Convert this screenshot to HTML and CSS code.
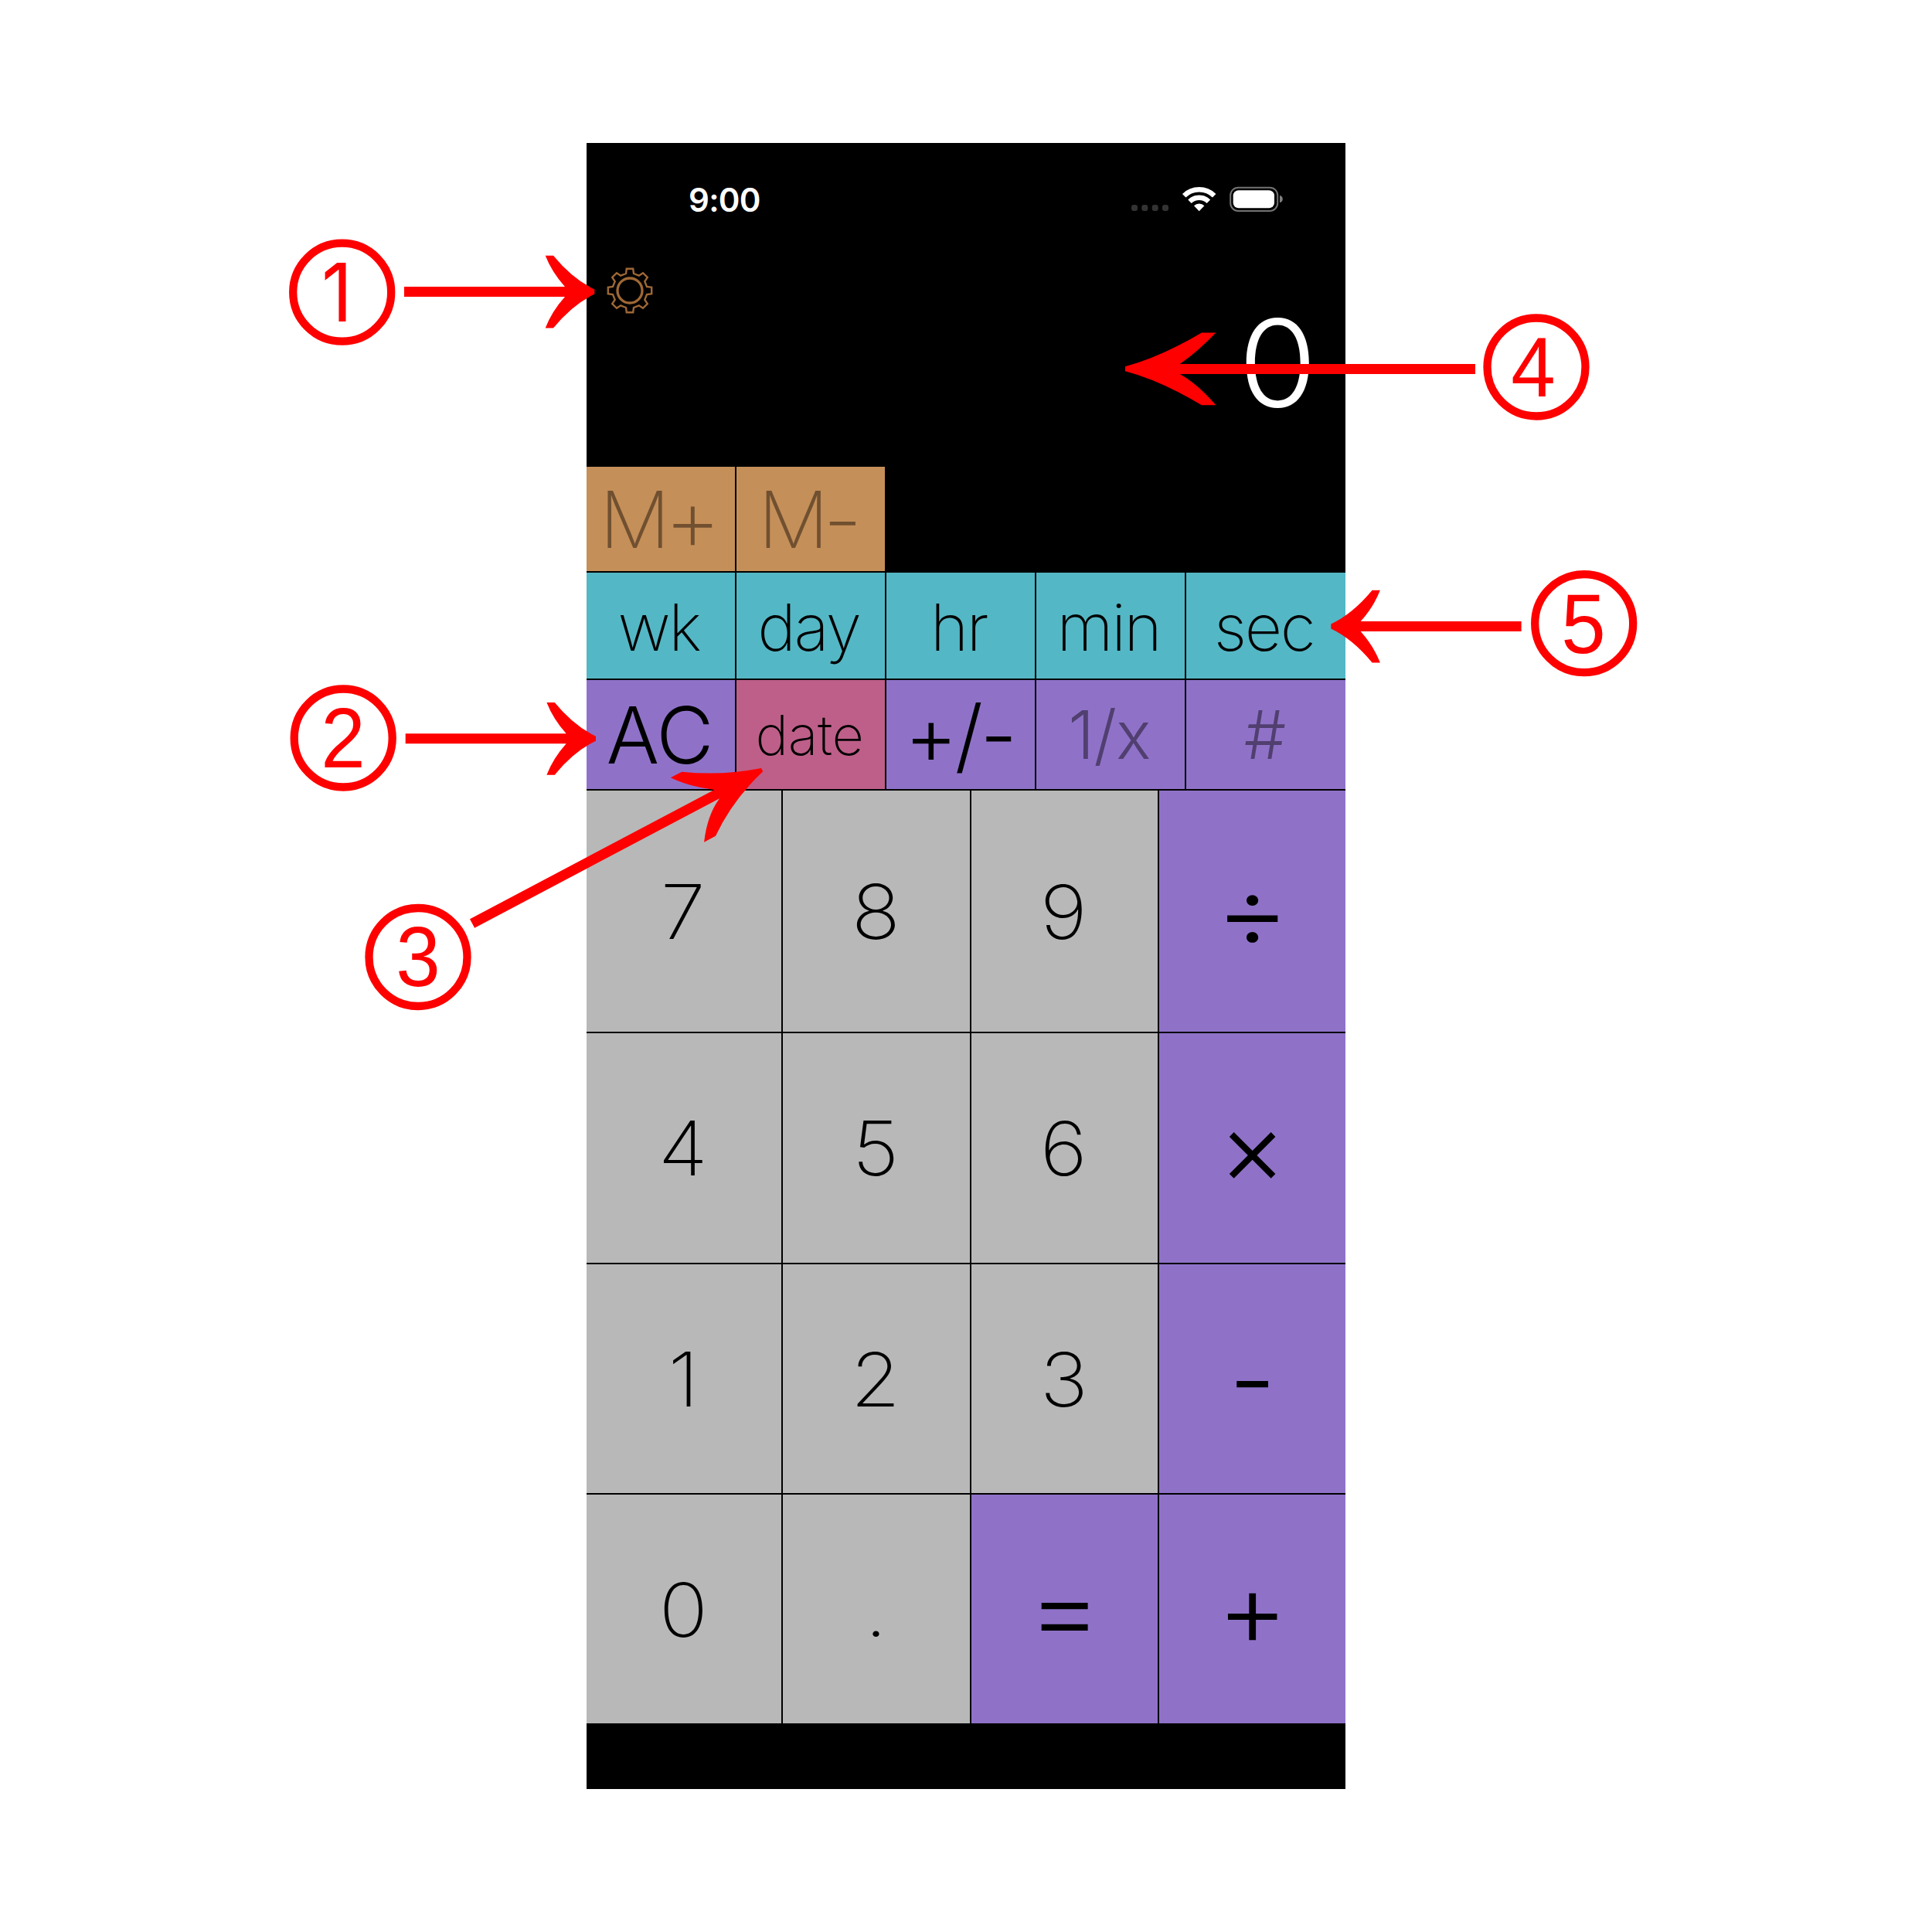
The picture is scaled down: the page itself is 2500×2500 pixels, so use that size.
FILE: index.html
```html
<!DOCTYPE html>
<html>
<head>
<meta charset="utf-8" />
<title>Time Calculator Help</title>
<link rel="stylesheet" href="styles.css">
</head>
<body>
<div class="page">

<!-- ************ Phone ************ -->
<div class="phone">
 <div class="statusBar">
  <span class="time">9:00</span>
  <svg class="statusIcons" width="196" height="34" viewBox="0 0 196 34">
   <g fill="#333">
    <rect x="0" y="24" width="8" height="8" rx="3"/>
    <rect x="13.3" y="24" width="8" height="8" rx="3"/>
    <rect x="26.7" y="24" width="8" height="8" rx="3"/>
    <rect x="40" y="24" width="8" height="8" rx="3"/>
   </g>
   <g transform="translate(87.7 32.3)">
    <path d="M-19.5 -20.1A28 28 0 0 1 19.5 -20.1M-12.2 -12.6A17.5 17.5 0 0 1 12.2 -12.6" fill="none" stroke="#fff" stroke-width="6.4"/>
    <path d="M0 0L-6.7 -7A9.7 9.7 0 0 1 6.7 -7Z" fill="#fff"/>
   </g>
   <rect x="128.2" y="1.7" width="61" height="30.2" rx="10" fill="none" stroke="#737373" stroke-width="2"/>
   <rect x="131.7" y="5.3" width="53.3" height="23" rx="7" fill="#fff"/>
   <path d="M192 11.7Q195.8 13 195.8 16.6T192 21.3Z" fill="#808080"/>
  </svg>
 </div>

 <div class="settings">
  <svg width="60" height="60" viewBox="-30 -30 60 60" fill="none" stroke="#9e6835">
   <path stroke-width="2.4" d="M-4.2 -28.2H4.2L5 -22L11.8 -19.3L17 -22.8L22.8 -17L19.3 -11.8L22 -5L28.2 -4.2V4.2L22 5L19.3 11.8L22.8 17L17 22.8L11.8 19.3L5 22L4.2 28.2H-4.2L-5 22L-11.8 19.3L-17 22.8L-22.8 17L-19.3 11.8L-22 5L-28.2 4.2V-4.2L-22 -5L-19.3 -11.8L-22.8 -17L-17 -22.8L-11.8 -19.3L-5 -22Z"/>
   <circle r="16" stroke-width="3.3"/>
  </svg>
 </div>

 <div class="display"><span>0</span></div>

 <div class="row memory">
  <div class="key orange"><span>M<span class="sign">+</span></span></div>
  <div class="key orange"><span>M<span class="sign">-</span></span></div>
 </div>
 <div class="row units">
  <div class="key blue">wk</div>
  <div class="key blue">day</div>
  <div class="key blue">hr</div>
  <div class="key blue">min</div>
  <div class="key blue">sec</div>
 </div>
 <div class="row functions">
  <div class="key purple">AC</div>
  <div class="key pink">date</div>
  <div class="key purple plusMinus">+/-</div>
  <div class="key purple disabled">1/x</div>
  <div class="key purple disabled">#</div>
 </div>

 <div class="keypad">
  <div class="key gray"><span>7</span></div>
  <div class="key gray"><span>8</span></div>
  <div class="key gray"><span>9</span></div>
  <div class="key purple operator"><span class="wide">÷</span></div>
  <div class="key gray"><span>4</span></div>
  <div class="key gray"><span>5</span></div>
  <div class="key gray"><span>6</span></div>
  <div class="key purple operator"><span>×</span></div>
  <div class="key gray"><span>1</span></div>
  <div class="key gray"><span>2</span></div>
  <div class="key gray"><span>3</span></div>
  <div class="key purple operator minus"><span>-</span></div>
  <div class="key gray"><span>0</span></div>
  <div class="key gray"><span>.</span></div>
  <div class="key purple operator"><span class="wide">=</span></div>
  <div class="key purple operator plus"><span>+</span></div>
 </div>
</div>

<!-- ************ Callouts ************ -->
<svg class="callouts" width="2500" height="2500" viewBox="0 0 2500 2500">
 <defs>
  <path id="shortArrow" d="M-246.3 -6.5H-38.3Q-55.3 -25.5 -63.6 -46.8H-53.3Q-28.3 -16.5 0 -3V3Q-28.3 16.5 -53.3 47H-63.6Q-55.3 25.5 -38.3 6.5H-246.3Z"/>
 </defs>
 <g class="arrows">
  <use href="#shortArrow" x="769.3" y="377.5"/>
  <use href="#shortArrow" x="771" y="955.7"/>
  <use href="#shortArrow" transform="translate(1722.3 810.6) scale(-1 1)"/>
  <path d="M1909 471H1526.7Q1550 455 1573.3 430.5H1555Q1502 462 1456 474.3V480.3Q1502 492.5 1555 524.3H1573.3Q1550 497 1526.7 484H1909Z"/>
  <path d="M608 1189.3L924.3 1022Q892 1018 867.7 1006.3L882.3 998.7Q935 1004 985 994L987.3 998.3Q948 1035 926 1081.7L911.1 1089.7Q915 1055 931 1033.3L614.1 1200.7Z"/>
 </g>
 <g class="rings">
  <circle cx="442.7" cy="378.2" r="63.5"/>
  <circle cx="444.2" cy="955" r="63.5"/>
  <circle cx="541" cy="1238.5" r="63.5"/>
  <circle cx="1988" cy="475" r="63.5"/>
  <circle cx="2049.7" cy="806.7" r="63.5"/>
 </g>
 <g class="numbers">
  <text class="one" x="436" y="416">1</text>
  <text x="444" y="993">2</text>
  <text x="541" y="1276">3</text>
  <text x="1984" y="513">4</text>
  <text x="2049" y="845">5</text>
 </g>
</svg>

</div>
</body>
</html>
```
FILE: styles.css
```css
body {
margin:0; background-color:#fff;
font-family: Inter, "Liberation Sans", sans-serif;
}
.page {
position:relative; box-sizing:border-box;
width:2500px; height:2500px; padding:185px 0 0 759px;
overflow:hidden;
}

/* ---- phone ---- */
.phone {
display:flex; flex-direction:column;
width:982px; height:2130px; background-color:#000; color:#000;
font-feature-settings:"calt" 0;
}
.statusBar {
display:flex; justify-content:space-between; align-items:flex-start;
box-sizing:border-box; height:160px; padding:56px 81px 0 132px;
}
.time { color:#fff; font-size:42px; line-height:36px; font-weight:600; letter-spacing:-.7px; }
.settings { height:64px; padding-left:26px; }
.settings svg, .statusIcons { display:block; }
.settings svg { margin-top:1px; }
.display {
height:194px; padding:1px 37px 0 0;
color:#fff; font-size:156px; line-height:119px; font-weight:340; text-align:right;
}
.display span { display:inline-block; transform:scaleX(1.06); transform-origin:right; }

/* ---- keys ---- */
.row { display:grid; grid-template-columns:repeat(4, 192px) 206px; gap:2px; margin-bottom:2px; }
.key { display:flex; justify-content:center; align-items:center; box-sizing:border-box; }
.memory { height:135px; font-size:102px; font-weight:200; letter-spacing:-8px; }
.sign { font-size:115px; line-height:0; vertical-align:-4px; }
.units { height:137px; font-size:84px; font-weight:200; letter-spacing:-2.4px; }
.functions { height:141px; font-size:102px; font-weight:300; letter-spacing:-1px; }
.orange { background-color:#c58f59; color:#705030; padding-right:9px; }
.blue { background-color:#54b7c5; padding:3px 5px 0 0; }
.purple { background-color:#8f72c8; }
.functions .key { padding-right:3px; }
.pink { background-color:#be5f89; font-size:72px; font-weight:200; letter-spacing:-.4px; }
.gray { background-color:#b8b8b8; }
.gray span { transform:translateX(-1px) scaleX(1.08); }
.plusMinus { font-size:105px; letter-spacing:-3.5px; }
.disabled { color:#513f70; font-size:86px; }
.keypad {
display:grid; gap:2px;
grid-template-columns:252px 242px 241px 241px;
grid-template-rows:312px 297px 296px 296px;
font-size:97px; font-weight:200;
}
.operator { font-size:134px; font-weight:310; padding-bottom:3px; }
.operator .wide { transform:scaleX(1.1); }
.plus span { transform:scaleX(1.05); }
.minus { font-size:134px; padding-bottom:0; }

/* ---- callouts ---- */
.callouts { position:absolute; left:0; top:0; }
.arrows { fill:#f00; }
.rings { fill:none; stroke:#f00; stroke-width:10.3; }
.numbers { fill:#f00; font-family:"Liberation Sans", sans-serif; font-size:110px; text-anchor:middle; }
.numbers text { transform-box:fill-box; transform-origin:center; transform:scaleX(.94); }
.one { font-family:Inter, sans-serif; font-size:105px; }
```
